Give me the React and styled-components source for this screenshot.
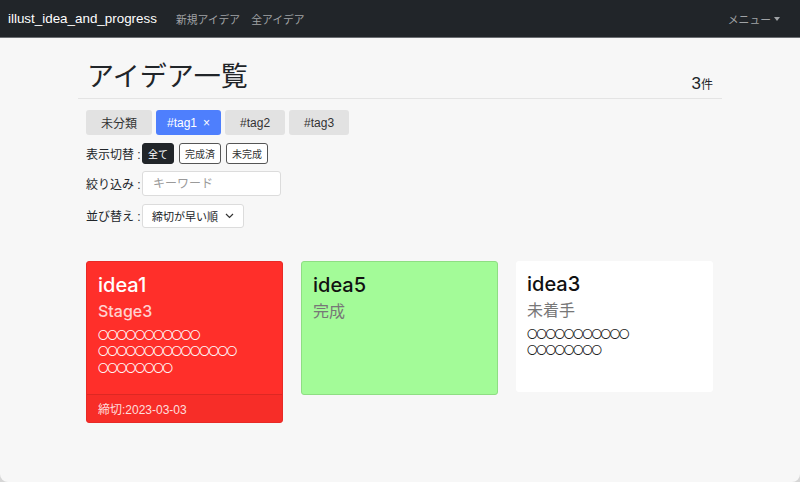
import React from "react";
import styled, { createGlobalStyle } from "styled-components";

const GlobalStyle = createGlobalStyle`
  html, body {
    margin: 0;
    padding: 0;
    background: #d6d6d6;
  }
  body {
    font-family: "Liberation Sans", "Noto Sans CJK JP", sans-serif;
    color: #212529;
  }
`;

const Frame = styled.div`
  width: 800px;
  height: 482px;
  background: #f7f7f7;
  border-radius: 0 0 8px 8px;
  overflow: hidden;
  box-sizing: border-box;
`;

const NavBar = styled.nav`
  height: 38px;
  background: #212529;
  display: flex;
  align-items: center;
  padding: 0 8px;
  box-sizing: border-box;
  border-bottom: 1px solid #6b6e72;
`;

const Brand = styled.span`
  color: #ffffff;
  font-size: 13.4px;
  margin-right: 19px;
`;

const NavLink = styled.span`
  color: #a0a3a6;
  font-size: 10.8px;
  margin-right: 11px;
`;

const MenuLink = styled(NavLink)`
  margin-left: auto;
  margin-right: 12px;
  display: flex;
  align-items: center;
  gap: 3px;
  &::after {
    content: "";
    border-top: 4px solid #a0a3a6;
    border-left: 3px solid transparent;
    border-right: 3px solid transparent;
    margin-top: 1px;
  }
`;

const Container = styled.main`
  width: 644px;
  margin-left: 78px;
`;

const Header = styled.div`
  display: flex;
  align-items: flex-end;
  justify-content: space-between;
  padding: 21px 9px 3px 9px;
  border-bottom: 1px solid #e4e4e4;
`;

const Title = styled.h1`
  margin: 0;
  font-size: 27px;
  font-weight: 400;
  line-height: 36px;
  color: #212529;
`;

const Count = styled.div`
  font-size: 17px;
  line-height: 20px;
  color: #212529;
  span {
    font-size: 12px;
  }
`;

const Controls = styled.div`
  padding: 11px 8px 0 8px;
  display: flex;
  flex-direction: column;
  gap: 7.5px;
`;

const TagRow = styled.div`
  display: flex;
  gap: 4px;
`;

const Tag = styled.button`
  height: 25px;
  padding: 0 ${(p) => (p.$active ? 11 : 15)}px;
  border: none;
  border-radius: 3px;
  font-family: inherit;
  font-size: 12px;
  background: ${(p) => (p.$active ? "#4e7ffd" : "#e2e2e2")};
  color: ${(p) => (p.$active ? "#ffffff" : "#333333")};
  display: flex;
  align-items: center;
  justify-content: center;
  gap: 6px;
`;

const Row = styled.div`
  display: flex;
  align-items: center;
`;

const Label = styled.span`
  font-size: 12px;
  color: #212529;
  width: 56px;
  flex-shrink: 0;
  white-space: nowrap;
`;

const ToggleGroup = styled.div`
  display: flex;
  gap: 5px;
`;

const Toggle = styled.button`
  height: 21px;
  padding: 0 5px;
  border: 1px solid ${(p) => (p.$active ? "#212529" : "#555")};
  border-radius: 3px;
  font-family: inherit;
  font-size: 10px;
  background: ${(p) => (p.$active ? "#212529" : "#ffffff")};
  color: ${(p) => (p.$active ? "#ffffff" : "#333")};
`;

const Input = styled.input`
  width: 139px;
  height: 25px;
  box-sizing: border-box;
  border: 1px solid #dcdcdc;
  border-radius: 3px;
  padding: 0 10px;
  font-family: inherit;
  font-size: 12px;
  background: #fff;
  &::placeholder {
    color: #9a9a9a;
  }
`;

const Select = styled.div`
  height: 24px;
  box-sizing: border-box;
  border: 1px solid #dcdcdc;
  border-radius: 3px;
  background: #fff;
  display: flex;
  align-items: center;
  gap: 7px;
  padding: 0 9px;
  font-size: 11px;
  white-space: nowrap;
  color: #212529;
`;

const Cards = styled.div`
  display: flex;
  align-items: flex-start;
  gap: 18px;
  padding: 33px 8px 0 8px;
`;

const Card = styled.div`
  width: 197px;
  box-sizing: border-box;
  border-radius: 3px;
  overflow: hidden;
  background: ${(p) => p.$bg};
  border: ${(p) => (p.$border ? `1px solid ${p.$border}` : "none")};
`;

const CardBody = styled.div`
  height: ${(p) => p.$h}px;
  padding: 11px 11px;
  box-sizing: border-box;
`;

const CardTitle = styled.div`
  font-family: Inter, "Liberation Sans", sans-serif;
  font-size: 20px;
  font-weight: 500;
  line-height: 24px;
  color: ${(p) => (p.$light ? "#ffffff" : "#111111")};
`;

const CardStage = styled.div`
  font-family: Inter, "Liberation Sans", "Noto Sans CJK JP", sans-serif;
  font-size: 16px;
  line-height: 22px;
  margin: 3px 0 5px;
  font-weight: ${(p) => (p.$light ? 500 : 400)};
  color: ${(p) => (p.$light ? "rgba(255,255,255,0.78)" : "#777")};
`;

const CardText = styled.div`
  font-family: "Noto Sans CJK JP", sans-serif;
  font-size: 10.5px;
  letter-spacing: -1.3px;
  line-height: 16.5px;
  color: ${(p) => (p.$light ? "#ffffff" : "#111")};
`;

const CardFooter = styled.div`
  height: 27px;
  display: flex;
  align-items: center;
  padding: 0 11px;
  border-top: 1px solid rgba(0, 0, 0, 0.1);
  background: rgba(0, 0, 0, 0.03);
  font-size: 12px;
  color: rgba(255, 255, 255, 0.85);
`;

const Chevron = () => (
  <svg width="9" height="6" viewBox="0 0 9 6" fill="none">
    <path d="M1 1l3.5 3.5L8 1" stroke="#333" strokeWidth="1.2" />
  </svg>
);

const cards = [
  {
    title: "idea1",
    stage: "Stage3",
    lines: ["〇〇〇〇〇〇〇〇〇〇〇", "〇〇〇〇〇〇〇〇〇〇〇〇〇〇〇", "〇〇〇〇〇〇〇〇"],
    bg: "#ff2f2a",
    border: "#e82a26",
    light: true,
    h: 132,
    due: "締切:2023-03-03",
  },
  { title: "idea5", stage: "完成", lines: [], bg: "#a3fb98", border: "#8ede83", h: 132 },
  {
    title: "idea3",
    stage: "未着手",
    lines: ["〇〇〇〇〇〇〇〇〇〇〇", "〇〇〇〇〇〇〇〇"],
    bg: "#ffffff",
    h: 131,
  },
];

const App = () => (
  <>
    <GlobalStyle />
    <Frame>
      <NavBar>
        <Brand>illust_idea_and_progress</Brand>
        <NavLink>新規アイデア</NavLink>
        <NavLink>全アイデア</NavLink>
        <MenuLink>メニュー</MenuLink>
      </NavBar>
      <Container>
        <Header>
          <Title>アイデア一覧</Title>
          <Count>
            3<span>件</span>
          </Count>
        </Header>
        <Controls>
          <TagRow>
            <Tag>未分類</Tag>
            <Tag $active>
              #tag1 <span>×</span>
            </Tag>
            <Tag>#tag2</Tag>
            <Tag>#tag3</Tag>
          </TagRow>
          <Row>
            <Label>表示切替 :</Label>
            <ToggleGroup>
              <Toggle $active>全て</Toggle>
              <Toggle>完成済</Toggle>
              <Toggle>未完成</Toggle>
            </ToggleGroup>
          </Row>
          <Row>
            <Label>絞り込み :</Label>
            <Input placeholder="キーワード" />
          </Row>
          <Row>
            <Label>並び替え :</Label>
            <Select>
              締切が早い順 <Chevron />
            </Select>
          </Row>
        </Controls>
        <Cards>
          {cards.map((c) => (
            <Card key={c.title} $bg={c.bg} $border={c.border}>
              <CardBody $h={c.h}>
                <CardTitle $light={c.light}>{c.title}</CardTitle>
                <CardStage $light={c.light}>{c.stage}</CardStage>
                <CardText $light={c.light}>
                  {c.lines.map((l, i) => (
                    <div key={i}>{l}</div>
                  ))}
                </CardText>
              </CardBody>
              {c.due && <CardFooter>{c.due}</CardFooter>}
            </Card>
          ))}
        </Cards>
      </Container>
    </Frame>
  </>
);

export default App;
